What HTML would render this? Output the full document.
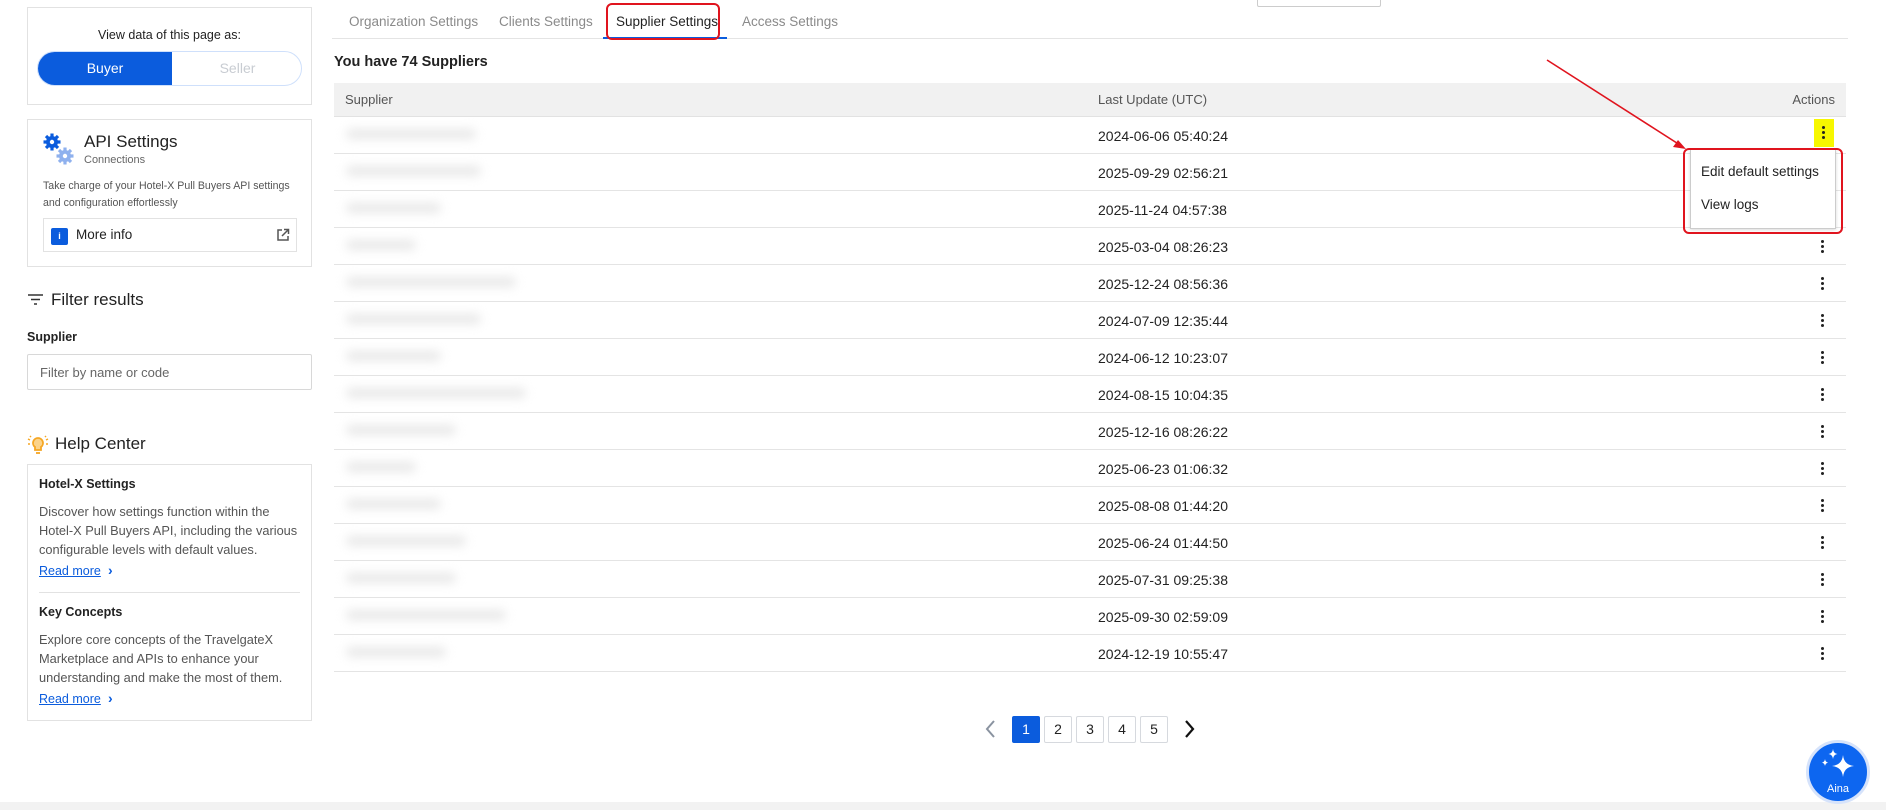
<!DOCTYPE html>
<html><head><meta charset="utf-8"><style>
*{box-sizing:border-box;margin:0;padding:0}
body{width:1886px;height:810px;position:relative;background:#fff;font-family:"Liberation Sans",Arial,sans-serif;color:#222;overflow:hidden}
.abs{position:absolute}
.card{position:absolute;border:1px solid #e2e2e2;background:#fff}
.tab{position:absolute;top:14px;font-size:13.5px;color:#8a8a8a;white-space:nowrap}
.row{position:absolute;left:334px;width:1512px;height:37px;border-bottom:1px solid #e4e4e4}
.row .d{position:absolute;left:764px;top:11px;font-size:14px;color:#222}
.row .k{position:absolute;left:1487px;top:12px;width:3px}
.row .k i{display:block;width:3px;height:3px;background:#222;border-radius:50%;margin-bottom:2px}
.row .b{position:absolute;left:12px;top:12px;height:10px;background:#e8e8e8;filter:blur(5px);border-radius:5px}
.pg{position:absolute;top:716px;width:28px;height:27px;border:1px solid #d6d9de;border-radius:2px;font-size:14px;text-align:center;line-height:25px;color:#222}
.ht{position:absolute;left:11px;font-size:12.8px;color:#555;line-height:19px;white-space:nowrap}
</style></head><body>

<div class="card" style="left:27px;top:7px;width:285px;height:98px">
  <div class="abs" style="left:0;width:283px;top:20px;text-align:center;font-size:12.5px;color:#222">View data of this page as:</div>
  <div class="abs" style="left:9px;top:43px;width:265px;height:35px;border:1px solid #cfe0fb;border-radius:18px;overflow:hidden">
    <div class="abs" style="left:0;top:0;width:134px;height:35px;background:#0b5cdd;color:#fff;font-size:14px;text-align:center;line-height:33px">Buyer</div>
    <div class="abs" style="left:134px;top:0;width:131px;height:35px;color:#c8ccd2;font-size:14px;text-align:center;line-height:33px">Seller</div>
  </div>
</div>

<div class="card" style="left:27px;top:119px;width:285px;height:148px">
  <svg class="abs" style="left:14px;top:12px" width="36" height="36" viewBox="0 0 36 36">
    <g fill="#0b5cdd"><circle cx="10" cy="10" r="6"/><g stroke="#0b5cdd" stroke-width="3.2"><line x1="10" y1="1.5" x2="10" y2="18.5"/><line x1="1.5" y1="10" x2="18.5" y2="10"/><line x1="4" y1="4" x2="16" y2="16"/><line x1="16" y1="4" x2="4" y2="16"/></g></g><circle cx="10" cy="10" r="2.2" fill="#fff"/>
    <g fill="#8fb1ee"><circle cx="23" cy="24" r="6"/><g stroke="#8fb1ee" stroke-width="3.2"><line x1="23" y1="15.5" x2="23" y2="32.5"/><line x1="14.5" y1="24" x2="31.5" y2="24"/><line x1="17" y1="18" x2="29" y2="30"/><line x1="29" y1="18" x2="17" y2="30"/></g></g><circle cx="23" cy="24" r="2.2" fill="#fff"/>
  </svg>
  <div class="abs" style="left:56px;top:12px;font-size:17px;color:#222">API Settings</div>
  <div class="abs" style="left:56px;top:34px;font-size:11px;color:#666">Connections</div>
  <div class="abs" style="left:15px;top:58px;font-size:10.6px;color:#555;line-height:16.5px;white-space:nowrap">Take charge of your Hotel-X Pull Buyers API settings<br>and configuration effortlessly</div>
  <div class="abs" style="left:15px;top:98px;width:254px;height:34px;border:1px solid #e2e2e2">
    <div class="abs" style="left:7px;top:9px;width:17px;height:17px;background:#0b5cdd;border-radius:2px;color:#fff;font-size:9px;text-align:center;line-height:17px;font-weight:bold">i</div>
    <div class="abs" style="left:32px;top:8px;font-size:13.5px;color:#222">More info</div>
    <svg class="abs" style="left:232px;top:9px" width="14" height="14" viewBox="0 0 14 14" fill="none" stroke="#555" stroke-width="1.5"><path d="M6 2H2v10h10V8M8 1.5h4.5V6M12.5 1.5 6 8"/></svg>
  </div>
</div>

<svg class="abs" style="left:28px;top:293px" width="15" height="13" viewBox="0 0 15 13" stroke="#333" stroke-width="1.5"><line x1="0" y1="2" x2="15" y2="2"/><line x1="3" y1="6.5" x2="12" y2="6.5"/><line x1="6" y1="11" x2="9" y2="11"/></svg>
<div class="abs" style="left:51px;top:290px;font-size:17px;color:#222">Filter results</div>
<div class="abs" style="left:27px;top:330px;font-size:12.5px;font-weight:bold;color:#222">Supplier</div>
<div class="abs" style="left:27px;top:354px;width:285px;height:36px;border:1px solid #d8d8d8;border-radius:2px"><span class="abs" style="left:12px;top:10px;font-size:13px;color:#666">Filter by name or code</span></div>

<svg class="abs" style="left:27px;top:435px" width="22" height="20" viewBox="0 0 22 20" fill="none" stroke="#f5a623" stroke-width="1.8"><path d="M11 3a5 5 0 0 0-3 9v3h6v-3a5 5 0 0 0-3-9z" fill="#fbd38a"/><path d="M9 18h4"/><path d="M1 4l2 1M1 9h2M21 4l-2 1M21 9h-2M3 1l1 1M19 1l-1 1" stroke-width="1.5"/></svg>
<div class="abs" style="left:55px;top:434px;font-size:17px;color:#222">Help Center</div>
<div class="card" style="left:27px;top:464px;width:285px;height:257px">
  <div class="abs" style="left:11px;top:12px;font-size:12.5px;font-weight:bold;color:#222">Hotel-X Settings</div>
  <div class="ht" style="top:37px">Discover how settings function within the<br>Hotel-X Pull Buyers API, including the various<br>configurable levels with default values.</div>
  <div class="abs" style="left:11px;top:99px;font-size:12.5px;color:#0b5cdd;text-decoration:underline">Read more</div>
  <div class="abs" style="left:80px;top:97px;font-size:14px;color:#0b5cdd;font-weight:bold">›</div>
  <div class="abs" style="left:11px;top:127px;width:261px;height:1px;background:#e2e2e2"></div>
  <div class="abs" style="left:11px;top:140px;font-size:12.5px;font-weight:bold;color:#222">Key Concepts</div>
  <div class="ht" style="top:165px">Explore core concepts of the TravelgateX<br>Marketplace and APIs to enhance your<br>understanding and make the most of them.</div>
  <div class="abs" style="left:11px;top:227px;font-size:12.5px;color:#0b5cdd;text-decoration:underline">Read more</div>
  <div class="abs" style="left:80px;top:225px;font-size:14px;color:#0b5cdd;font-weight:bold">›</div>
</div>

<div class="abs" style="left:1257px;top:-2px;width:124px;height:9px;border:1px solid #ccc;border-radius:2px"></div>

<div class="tab" style="left:349px">Organization Settings</div>
<div class="tab" style="left:499px">Clients Settings</div>
<div class="tab" style="left:616px;color:#222">Supplier Settings</div>
<div class="tab" style="left:742px">Access Settings</div>
<div class="abs" style="left:332px;top:38px;width:1516px;height:1px;background:#e4e4e4"></div>
<div class="abs" style="left:603px;top:37px;width:124px;height:2px;background:#0b5cdd"></div>
<div class="abs" style="left:606px;top:3px;width:114px;height:37px;border:2px solid #e0141e;border-radius:6px"></div>

<div class="abs" style="left:334px;top:54px;font-size:14.5px;font-weight:bold;color:#222">You have 74 Suppliers</div>

<div class="abs" style="left:334px;top:83px;width:1512px;height:34px;background:#f1f1f1;border-bottom:1px solid #e2e2e2">
  <span class="abs" style="left:11px;top:9px;font-size:13px;color:#555">Supplier</span>
  <span class="abs" style="left:764px;top:9px;font-size:13px;color:#555">Last Update (UTC)</span>
  <span class="abs" style="right:11px;top:9px;font-size:13px;color:#555">Actions</span>
</div>

<div class="row" style="top:117px"><div class="b" style="width:130px"></div><div class="d">2024-06-06 05:40:24</div></div>
<div class="row" style="top:154px"><div class="b" style="width:135px"></div><div class="d">2025-09-29 02:56:21</div></div>
<div class="row" style="top:191px"><div class="b" style="width:95px"></div><div class="d">2025-11-24 04:57:38</div></div>
<div class="row" style="top:228px"><div class="b" style="width:70px"></div><div class="d">2025-03-04 08:26:23</div><div class="k"><i></i><i></i><i></i></div></div>
<div class="row" style="top:265px"><div class="b" style="width:170px"></div><div class="d">2025-12-24 08:56:36</div><div class="k"><i></i><i></i><i></i></div></div>
<div class="row" style="top:302px"><div class="b" style="width:135px"></div><div class="d">2024-07-09 12:35:44</div><div class="k"><i></i><i></i><i></i></div></div>
<div class="row" style="top:339px"><div class="b" style="width:95px"></div><div class="d">2024-06-12 10:23:07</div><div class="k"><i></i><i></i><i></i></div></div>
<div class="row" style="top:376px"><div class="b" style="width:180px"></div><div class="d">2024-08-15 10:04:35</div><div class="k"><i></i><i></i><i></i></div></div>
<div class="row" style="top:413px"><div class="b" style="width:110px"></div><div class="d">2025-12-16 08:26:22</div><div class="k"><i></i><i></i><i></i></div></div>
<div class="row" style="top:450px"><div class="b" style="width:70px"></div><div class="d">2025-06-23 01:06:32</div><div class="k"><i></i><i></i><i></i></div></div>
<div class="row" style="top:487px"><div class="b" style="width:95px"></div><div class="d">2025-08-08 01:44:20</div><div class="k"><i></i><i></i><i></i></div></div>
<div class="row" style="top:524px"><div class="b" style="width:120px"></div><div class="d">2025-06-24 01:44:50</div><div class="k"><i></i><i></i><i></i></div></div>
<div class="row" style="top:561px"><div class="b" style="width:110px"></div><div class="d">2025-07-31 09:25:38</div><div class="k"><i></i><i></i><i></i></div></div>
<div class="row" style="top:598px"><div class="b" style="width:160px"></div><div class="d">2025-09-30 02:59:09</div><div class="k"><i></i><i></i><i></i></div></div>
<div class="row" style="top:635px"><div class="b" style="width:100px"></div><div class="d">2024-12-19 10:55:47</div><div class="k"><i></i><i></i><i></i></div></div>

<div class="abs" style="left:1814px;top:119px;width:20px;height:28px;background:#f7f700"></div>
<div class="abs" style="left:1822px;top:126px;width:3px"><i style="display:block;width:3px;height:3px;background:#222;border-radius:50%;margin-bottom:2px"></i><i style="display:block;width:3px;height:3px;background:#222;border-radius:50%;margin-bottom:2px"></i><i style="display:block;width:3px;height:3px;background:#222;border-radius:50%"></i></div>

<div class="abs" style="left:1690px;top:149px;width:146px;height:80px;background:#fff;border:1px solid #ccc;box-shadow:0 1px 3px rgba(0,0,0,.15)">
  <div class="abs" style="left:10px;top:14px;font-size:13.5px;color:#222;white-space:nowrap">Edit default settings</div>
  <div class="abs" style="left:10px;top:47px;font-size:13.5px;color:#222">View logs</div>
</div>
<div class="abs" style="left:1683px;top:148px;width:160px;height:86px;border:2px solid #e0141e;border-radius:6px"></div>

<svg class="abs" style="left:0;top:0" width="1886" height="810"><line x1="1547" y1="60" x2="1680" y2="145" stroke="#e0141e" stroke-width="1.6"/><path d="M1686 149l-13-2 5-7z" fill="#e0141e"/></svg>

<svg class="abs" style="left:984px;top:719px" width="14" height="20" viewBox="0 0 14 20"><path d="M10 2 3 10l7 8" fill="none" stroke="#8a93a0" stroke-width="2"/></svg>
<div class="pg" style="left:1012px;background:#0b5cdd;border-color:#0b5cdd;color:#fff">1</div>
<div class="pg" style="left:1044px">2</div>
<div class="pg" style="left:1076px">3</div>
<div class="pg" style="left:1108px">4</div>
<div class="pg" style="left:1140px">5</div>
<svg class="abs" style="left:1182px;top:719px" width="14" height="20" viewBox="0 0 14 20"><path d="M4 2l7 8-7 8" fill="none" stroke="#111" stroke-width="2.2"/></svg>

<div class="abs" style="left:0;top:802px;width:1886px;height:8px;background:#f2f2f2"></div>

<div class="abs" style="left:1806px;top:740px;width:64px;height:64px;border-radius:50%;background:#0d66f0;border:3px solid #d6e3fb">
  <svg class="abs" style="left:10px;top:5px" width="40" height="36" viewBox="0 0 40 36" fill="#fff"><path d="M24 7q1 10 11 11q-10 1-11 11q-1-10-11-11q10-1 11-11z"/><path d="M14 1q.5 4.5 4.5 5q-4 .5-4.5 5q-.5-4.5-4.5-5q4-.5 4.5-5z"/><path d="M6 11q.4 3.2 3.2 3.6q-2.8.4-3.2 3.6q-.4-3.2-3.2-3.6q2.8-.4 3.2-3.6z"/></svg>
  <div class="abs" style="left:0;width:58px;top:40px;text-align:center;font-size:11px;color:#fff">Aina</div>
</div>

</body></html>
